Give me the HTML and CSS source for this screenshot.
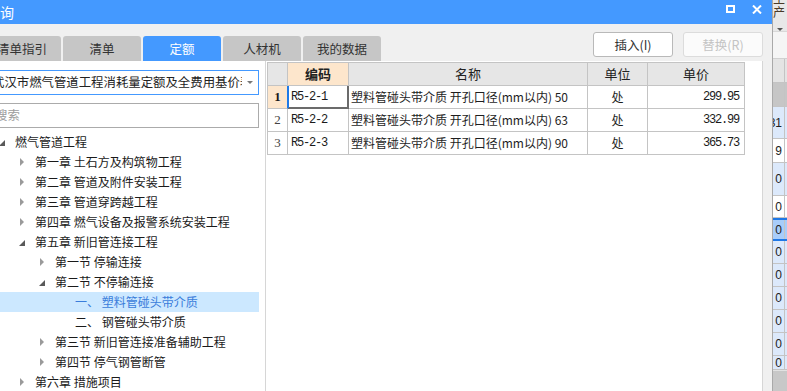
FILE: index.html
```html
<!DOCTYPE html>
<html lang="zh-CN">
  <head>
    <meta charset="UTF-8" />
    <title>查询</title>
    <link rel="stylesheet" href="styles.css">
  </head>
  <body>
    <div class="screen">
      <!-- 查询对话框 -->
      <div class="dialog">
        <div class="titlebar">
          <span class="title">查询</span>
          <div class="winbtns">
            <svg width="9" height="8" viewBox="0 0 9 8"><rect x="1" y="1" width="7" height="6" fill="none" stroke="#fff" stroke-width="2"/></svg>
            <svg width="10" height="9" viewBox="0 0 10 9"><path d="M1 0.5 L9 8.5 M9 0.5 L1 8.5" stroke="#fff" stroke-width="2"/></svg>
          </div>
        </div>

        <div class="body">
          <div class="toolbar">
            <div class="tabs">
              <div class="tab">清单指引</div>
              <div class="tab">清单</div>
              <div class="tab active">定额</div>
              <div class="tab">人材机</div>
              <div class="tab">我的数据</div>
            </div>
            <div class="actions">
              <button class="btn">插入(I)</button>
              <button class="btn" disabled>替换(R)</button>
            </div>
          </div>

          <div class="content">
            <!-- 左侧定额树 -->
            <div class="side">
              <div class="select">
                <span class="select-text">武汉市燃气管道工程消耗量定额及全费用基价表</span>
                <span class="caret"></span>
              </div>
              <div class="search">搜索</div>
              <ul class="tree">
                <li class="node lv0"><span class="tog"><i class="open"></i></span>燃气管道工程</li>
                <li class="node lv1"><span class="tog"><i class="shut"></i></span>第一章 土石方及构筑物工程</li>
                <li class="node lv1"><span class="tog"><i class="shut"></i></span>第二章 管道及附件安装工程</li>
                <li class="node lv1"><span class="tog"><i class="shut"></i></span>第三章 管道穿跨越工程</li>
                <li class="node lv1"><span class="tog"><i class="shut"></i></span>第四章 燃气设备及报警系统安装工程</li>
                <li class="node lv1"><span class="tog"><i class="open"></i></span>第五章 新旧管连接工程</li>
                <li class="node lv2"><span class="tog"><i class="shut"></i></span>第一节 停输连接</li>
                <li class="node lv2"><span class="tog"><i class="open"></i></span>第二节 不停输连接</li>
                <li class="node lv3 selected"><span class="tog"></span>一、 塑料管碰头带介质</li>
                <li class="node lv3"><span class="tog"></span>二、 钢管碰头带介质</li>
                <li class="node lv2"><span class="tog"><i class="shut"></i></span>第三节 新旧管连接准备辅助工程</li>
                <li class="node lv2"><span class="tog"><i class="shut"></i></span>第四节 停气钢管断管</li>
                <li class="node lv1"><span class="tog"><i class="shut"></i></span>第六章 措施项目</li>
              </ul>
            </div>

            <!-- 定额列表 -->
            <div class="main">
              <div class="grid">
                <div class="cell hd"></div>
                <div class="cell hd key">编码</div>
                <div class="cell hd">名称</div>
                <div class="cell hd">单位</div>
                <div class="cell hd">单价</div>

                <div class="cell rn cur">1</div>
                <div class="cell code focus">R5-2-1</div>
                <div class="cell name">塑料管碰头带介质 开孔口径(mm以内) 50</div>
                <div class="cell unit">处</div>
                <div class="cell price">299.95</div>

                <div class="cell rn">2</div>
                <div class="cell code">R5-2-2</div>
                <div class="cell name">塑料管碰头带介质 开孔口径(mm以内) 63</div>
                <div class="cell unit">处</div>
                <div class="cell price">332.99</div>

                <div class="cell rn">3</div>
                <div class="cell code">R5-2-3</div>
                <div class="cell name">塑料管碰头带介质 开孔口径(mm以内) 90</div>
                <div class="cell unit">处</div>
                <div class="cell price">365.73</div>
              </div>
            </div>
          </div>
        </div>
      </div>

      <!-- 背后的主窗口 -->
      <div class="bg-app">
        <div class="bg-top"><span class="bg-label">生产</span><span class="bg-caret"></span></div>
        <div class="bg-gap"></div>
        <div class="bg-row head h24"><span class="bg-cell"></span></div>
        <div class="bg-row dark h24"><span class="bg-cell"></span></div>
        <div class="bg-row blue h32"><span class="bg-cell">31</span></div>
        <div class="bg-row h24"><span class="bg-cell">9</span></div>
        <div class="bg-row blue h33"><span class="bg-cell">0</span></div>
        <div class="bg-row h22"><span class="bg-cell">0</span></div>
        <div class="bg-row sel h23"><span class="bg-cell">0</span></div>
        <div class="bg-row blue h23"><span class="bg-cell">0</span></div>
        <div class="bg-row blue h23"><span class="bg-cell">0</span></div>
        <div class="bg-row blue h23"><span class="bg-cell">0</span></div>
        <div class="bg-row blue h23"><span class="bg-cell">0</span></div>
        <div class="bg-row blue h23"><span class="bg-cell">0</span></div>
        <div class="bg-row blue h14"><span class="bg-cell">0</span></div>
        <div class="bg-scroll"></div>
      </div>
    </div>
  </body>
</html>
```

FILE: styles.css
```css
* {
  margin: 0;
  padding: 0;
  box-sizing: border-box;
}

body {
  width: 787px;
  height: 391px;
  overflow: hidden;
  background: #f0f0f0;
  font-family: "Noto Sans CJK SC", "Liberation Sans", sans-serif;
  font-size: 12px;
  color: #1e1e1e;
}

.screen {
  display: flex;
  height: 391px;
}

/* 对话框 */
.dialog {
  width: 772px;
  flex: none;
  display: flex;
  flex-direction: column;
  background: #f0f0f0;
}

.titlebar {
  height: 24px;
  flex: none;
  background: #4499ff;
  color: #fff;
  display: flex;
  justify-content: space-between;
  align-items: flex-start;
  padding-right: 10px;
}

.title {
  margin-left: -14px;
  font-size: 14px;
  line-height: 24px;
}

.winbtns {
  display: flex;
  gap: 17px;
  padding-top: 5px;
}

.winbtns svg {
  display: block;
}

.body {
  flex: 1;
  min-height: 0;
  display: flex;
  flex-direction: column;
  padding-right: 9px;
}

.toolbar {
  height: 37px;
  flex: none;
  display: flex;
  justify-content: space-between;
}

.tabs {
  display: flex;
  gap: 2px;
  align-self: flex-end;
  margin-left: -17px;
}

.tab {
  width: 78px;
  height: 25px;
  background: #c6c6c6;
  border-radius: 3px 3px 0 0;
  text-align: center;
  line-height: 25px;
  font-size: 12.5px;
  color: #333;
}

.tab.active {
  background: #4499ff;
  color: #fff;
}

.actions {
  display: flex;
  gap: 10px;
  padding-top: 8px;
}

.btn {
  width: 80px;
  height: 25px;
  border: 1px solid #b9b9b9;
  border-radius: 3px;
  background: #fff;
  font-family: "Noto Sans CJK SC", sans-serif;
  font-size: 12.5px;
  color: #333;
}

.btn:disabled {
  border-color: #dcdcdc;
  background: #fbfbfb;
  color: #c4c4c4;
}

.content {
  flex: 1;
  min-height: 0;
  display: flex;
  background: #fff;
  border-right: 1px solid #d6d6d6;
}

/* 左侧 */
.side {
  width: 276px;
  flex: none;
  margin-left: -10px;
  border-right: 1px solid #d6d6d6;
  padding: 9px 6px 0 0;
}

.select {
  height: 25px;
  border: 1px solid #4499ff;
  display: flex;
  align-items: center;
  padding: 0 5px 0 1px;
  gap: 5px;
}

.select-text {
  flex: 1;
  overflow: hidden;
  white-space: nowrap;
  font-size: 12.4px;
  line-height: 23px;
  color: #222;
}

.caret {
  width: 0;
  height: 0;
  border-top: 3px solid #777;
  border-left: 3px solid transparent;
  border-right: 3px solid transparent;
}

.search {
  margin-top: 8px;
  height: 25px;
  border: 1px solid #ababab;
  padding-left: 4px;
  line-height: 23px;
  font-size: 12.4px;
  color: #9c9c9c;
}

.tree {
  list-style: none;
  padding-top: 4px;
}

.node {
  height: 20px;
  line-height: 20px;
  display: flex;
  align-items: center;
  white-space: nowrap;
  color: #1a1a1a;
}

.lv0 { padding-left: 5px; }
.lv1 { padding-left: 25px; }
.lv2 { padding-left: 45px; }
.lv3 { padding-left: 65px; }

.node.selected {
  background: #cce8ff;
  color: #3a7ddb;
}

.tog {
  width: 20px;
  height: 20px;
  flex: none;
  display: flex;
  align-items: center;
  padding-left: 4px;
}

.tog .shut {
  width: 0;
  height: 0;
  margin-left: 1px;
  border-left: 4px solid #9a9a9a;
  border-top: 4px solid transparent;
  border-bottom: 4px solid transparent;
}

.tog .open {
  width: 0;
  height: 0;
  margin-top: 2px;
  border-left: 6px solid transparent;
  border-bottom: 6px solid #595959;
}

/* 定额表格 */
.main {
  flex: 1;
  padding: 1px 0 0 1px;
}

.grid {
  display: grid;
  grid-template-columns: 20px 61px 239px 60px 97px;
  width: 478px;
  border-left: 1px solid #c4c4c4;
  border-top: 1px solid #c4c4c4;
}

.cell {
  height: 23px;
  line-height: 22px;
  border-right: 1px solid #c4c4c4;
  border-bottom: 1px solid #c4c4c4;
  white-space: nowrap;
  overflow: hidden;
}

.hd {
  background: #e6e6e6;
  text-align: center;
  font-size: 13px;
  color: #222;
}

.hd.key {
  background: #fde6cc;
  font-weight: bold;
}

.rn {
  text-align: center;
  font-family: "Liberation Serif", serif;
  font-size: 13px;
  color: #444;
}

.rn.cur {
  background: #fde6cc;
  font-weight: bold;
  color: #1a1a1a;
  border-right-color: #1f7ae8;
}

.code,
.price {
  font-family: "Liberation Mono", monospace;
  font-size: 12px;
  letter-spacing: -1.2px;
  color: #1a1a1a;
}

.code {
  padding-left: 3px;
}

.code.focus {
  border-right-color: #6b6b6b;
  border-bottom-color: #6b6b6b;
  box-shadow: inset 1px 0 0 #1f7ae8, inset -1px -1px 0 #6b6b6b;
}

.name {
  padding-left: 2px;
  font-size: 12px;
}

.unit {
  text-align: center;
  font-size: 12px;
}

.price {
  text-align: right;
  padding-right: 5px;
}

/* 背后主窗口的一条 */
.bg-app {
  flex: 1;
  border-left: 1px solid #a9a9a9;
  display: flex;
  flex-direction: column;
  background: #f0f0f0;
  overflow: hidden;
}

.bg-top {
  height: 32px;
  flex: none;
  background: #e8e8e8;
  border-bottom: 1px solid #d8d8d8;
  display: flex;
  flex-direction: column;
  align-items: center;
}

.bg-label {
  margin-top: -9px;
  font-size: 12px;
  line-height: 14px;
  color: #4a3a28;
}

.bg-caret {
  margin-top: 9px;
  width: 0;
  height: 0;
  border-top: 3px solid #555;
  border-left: 3px solid transparent;
  border-right: 3px solid transparent;
}

.bg-gap {
  height: 27px;
  flex: none;
  background: #f5f5f5;
  border-bottom: 1px solid #d0d0d0;
}

.bg-row {
  flex: none;
  display: flex;
  background: #fff;
  border-bottom: 1px solid #c4c4c4;
}

.bg-row.head { background: #e4e4e4; }
.bg-row.dark { background: #c6c6c6; }
.bg-row.blue { background: #dce9fb; }

.bg-row.sel {
  background: #a8cdfa;
  border-top: 2px solid #1f78e6;
  border-bottom: 2px solid #1f78e6;
}

.h14 { height: 14px; }
.h22 { height: 22px; }
.h23 { height: 23px; }
.h24 { height: 24px; }
.h32 { height: 32px; }
.h33 { height: 33px; }

.bg-cell {
  width: 12px;
  flex: none;
  border-right: 1px solid #c4c4c4;
  display: flex;
  align-items: center;
  justify-content: flex-end;
  padding-right: 2px;
  font-family: "Liberation Sans", sans-serif;
  font-size: 12px;
  color: #222;
}

.bg-scroll {
  flex: 1;
  background: #c8c8c8;
  border-top: 1px solid #e2e2e2;
}
```
